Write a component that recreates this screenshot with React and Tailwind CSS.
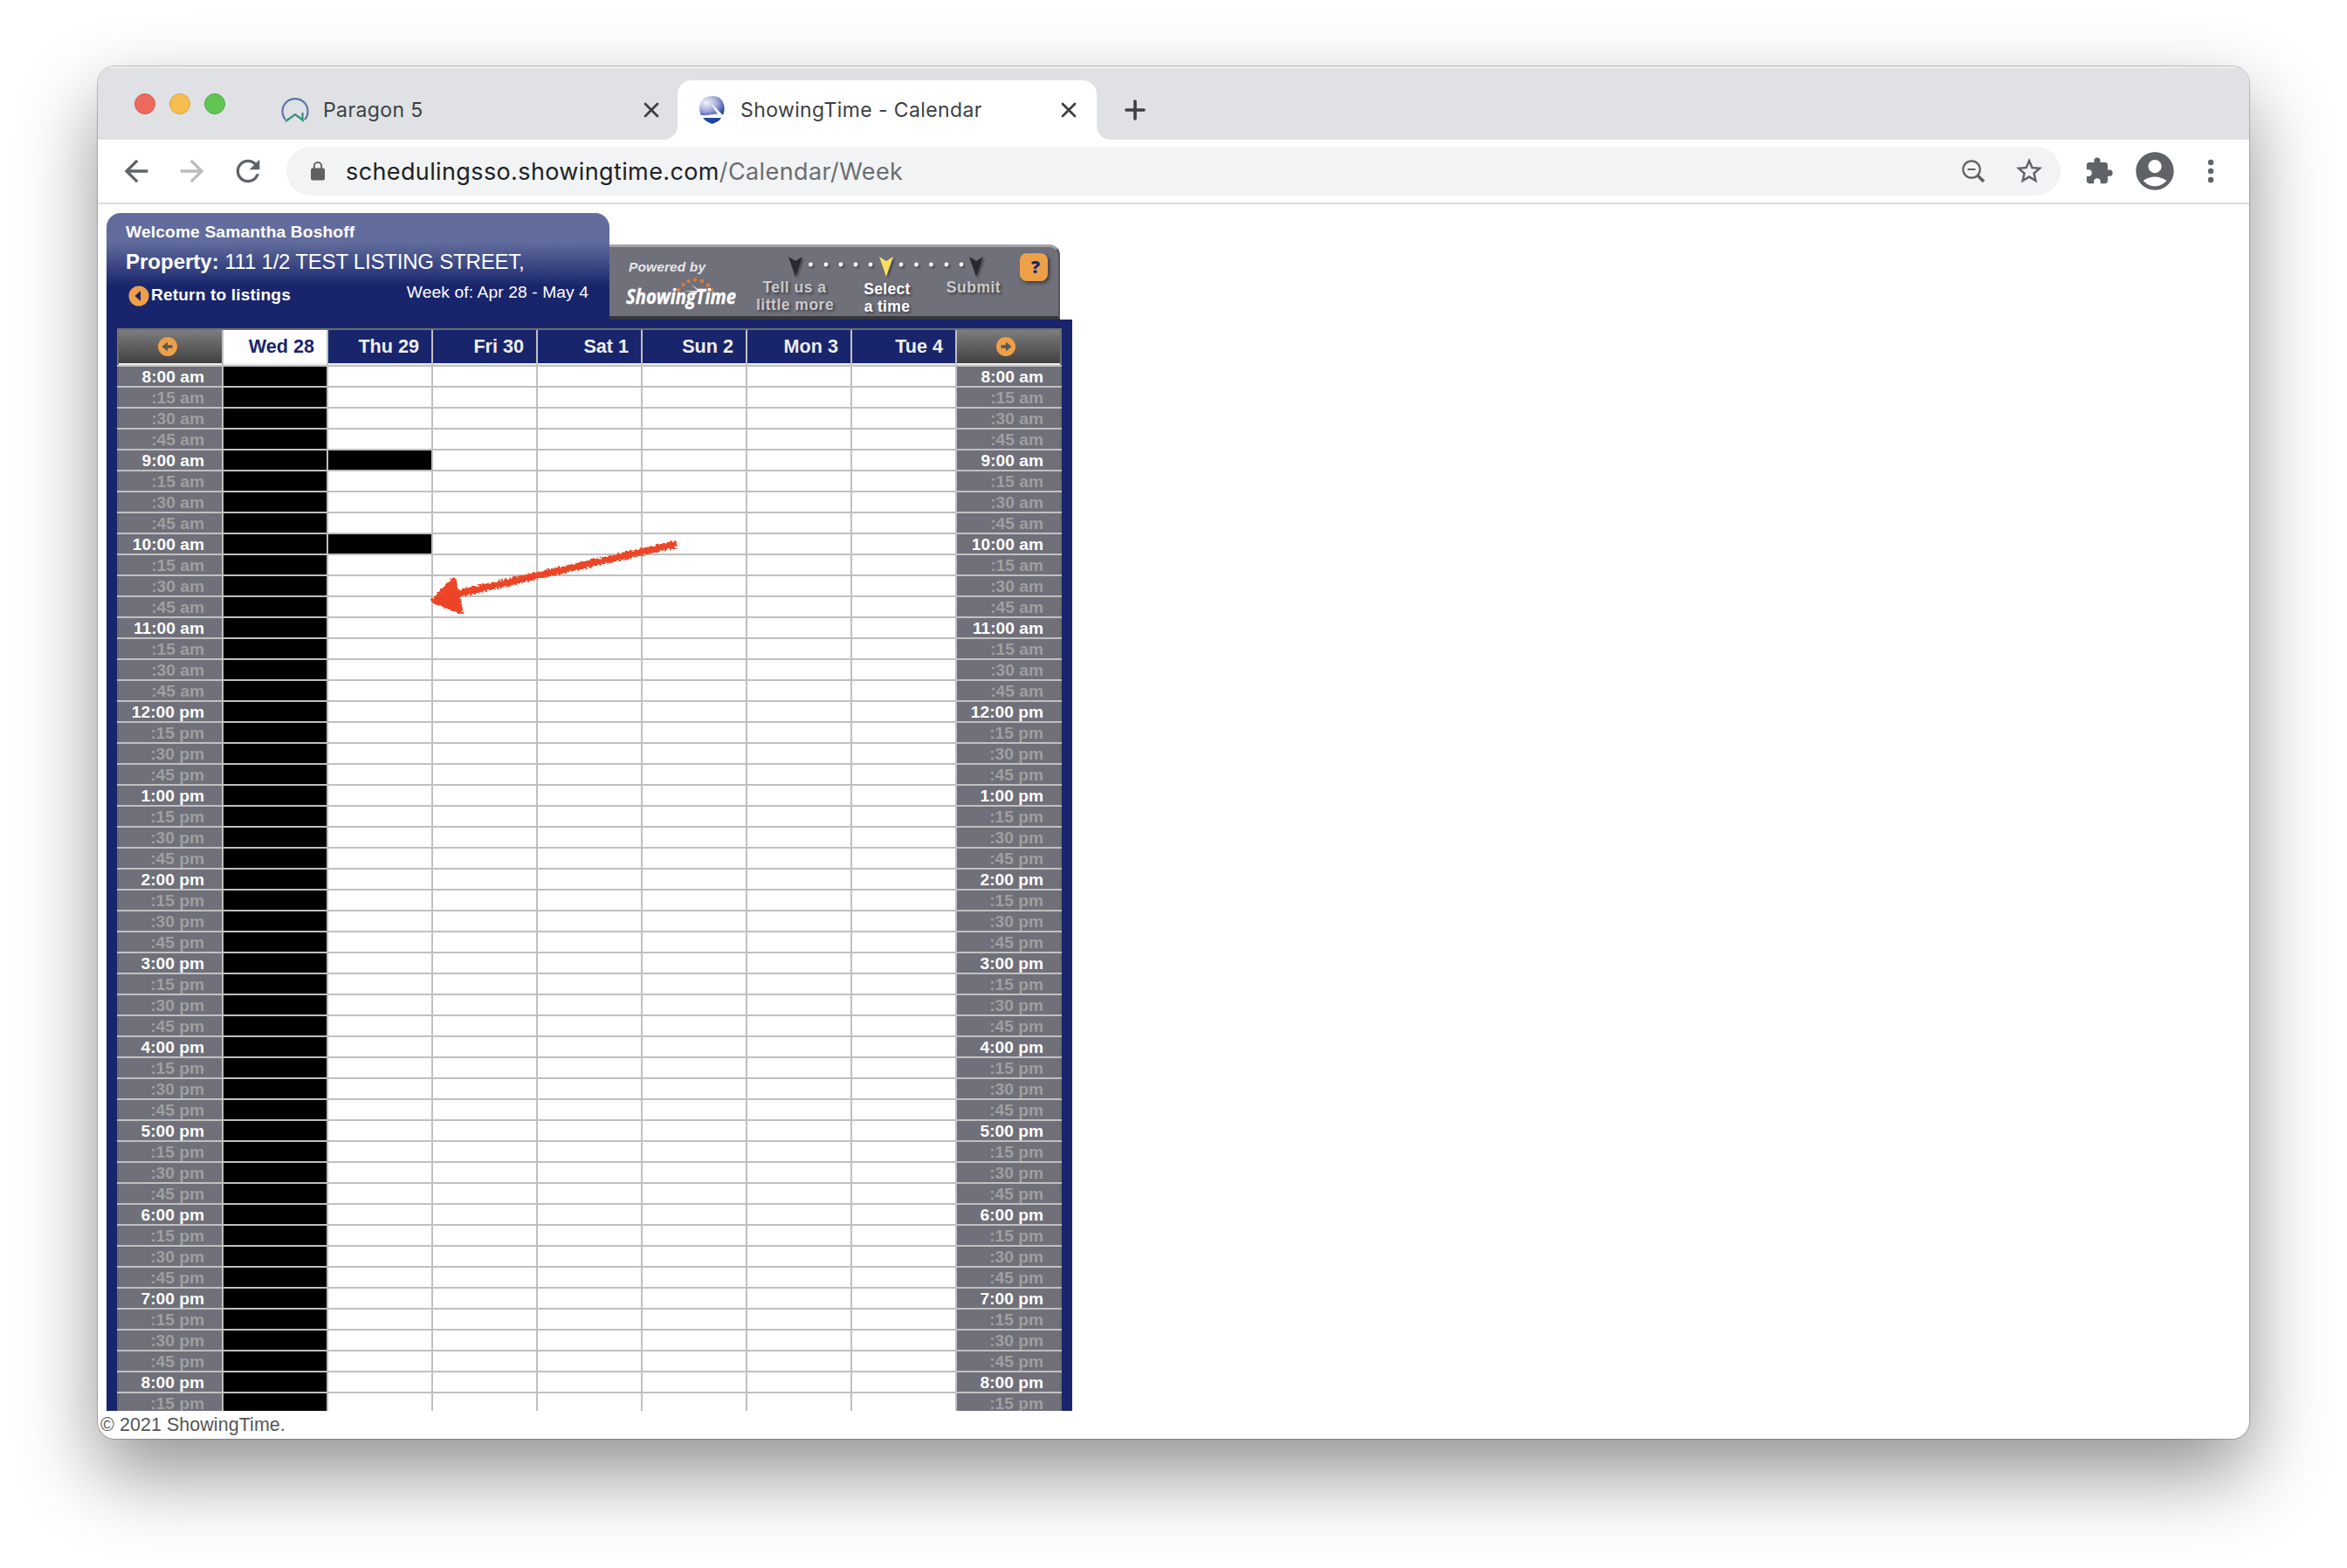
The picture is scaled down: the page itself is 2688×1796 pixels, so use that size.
import React from "react";
import clsx from "clsx";
import {
  MdArrowBack,
  MdArrowForward,
  MdStarOutline,
  MdExtension,
  MdRefresh,
  MdAccountCircle,
} from "react-icons/md";

const days = ["Wed 28", "Thu 29", "Fri 30", "Sat 1", "Sun 2", "Mon 3", "Tue 4"];

// Cells that can not be booked, keyed by day
const blocked = {
  "Thu 29": ["9:00 am", "10:00 am"],
};

const allSlots = [];
for (let h = 8; h <= 20; h++) {
  const suffix = h < 12 ? "am" : "pm";
  const hour = h > 12 ? h - 12 : h;
  ["00", "15", "30", "45"].forEach((m) => {
    allSlots.push({
      key: `${h}${m}`,
      full: m === "00",
      label: m === "00" ? `${hour}:00 ${suffix}` : `:${m} ${suffix}`,
    });
  });
}

// Last slot of the day is 8:15 pm
const slots = allSlots.slice(0, 50);

function CloseIcon() {
  return (
    <svg width="18" height="18" viewBox="0 0 18 18" stroke="#3c4043" strokeWidth="2.8" strokeLinecap="round">
      <path d="M2 2L16 16M16 2L2 16" />
    </svg>
  );
}

function LockIcon() {
  return (
    <svg width="16" height="22" viewBox="0 0 16 22">
      <rect x="0" y="7.500" width="16" height="14" rx="2" fill="#5f6061" />
      <path d="M3.800 8.500V5.200A4.200 4.200 0 0 1 12.200 5.200V8.500" fill="none" stroke="#5f6061" strokeWidth="1.900" />
    </svg>
  );
}

function ZoomOutIcon() {
  return (
    <svg width="27" height="27" viewBox="0 0 27 27" fill="none" stroke="#5f6061">
      <circle cx="11" cy="11" r="9.700" strokeWidth="2.200" />
      <path d="M6.500 11H15.500" strokeWidth="1.800" />
      <path d="M18 18L25 25" strokeWidth="3.600" />
    </svg>
  );
}

function ParagonIcon() {
  return (
    <svg width="32" height="32" viewBox="0 0 32 32" fill="none">
      <path d="M5 25A14.5 14.5 0 1 1 27 25" stroke="#5b78aa" strokeWidth="2.2" />
      <path d="M5 27L16 19L22 23.500L26 26.500M24.500 17V25" stroke="#35917f" strokeWidth="2.2" />
    </svg>
  );
}

function ShowingTimeIcon() {
  return (
    <svg width="32" height="34" viewBox="0 0 32 34">
      <defs>
        <radialGradient id="globe" cx="0.28" cy="0.34" r="0.8">
          <stop offset="0" stopColor="#f4f4fb" />
          <stop offset="0.55" stopColor="#a4abd7" />
          <stop offset="1" stopColor="#2a4aab" />
        </radialGradient>
      </defs>
      <path d="M3 23C0 17 0 9 6 4C12 0 22 0 26 5C31 11 30 18 28 23Z" fill="url(#globe)" />
      <path d="M14 9L30 25L23 24Z" fill="#fff" />
      <path d="M2 24L20 21.500L28 25.500H2Z" fill="#fff" />
      <path d="M5 26H26C24 30 20 31 15.500 33C12 31 8 30 5 26Z" fill="#1f43a3" />
    </svg>
  );
}

function TabStrip() {
  return (
    <div className="flex h-[84px] shrink-0 bg-[#dfe1e5] border-t-2 border-[#eceef0]">
      <div className="flex gap-4 pl-[42px] pt-[29px] w-[210px]">
        <span className="size-6 rounded-full bg-[#ed6a5e] border border-[#d35a50]" />
        <span className="size-6 rounded-full bg-[#f5bf4f] border border-[#d8a240]" />
        <span className="size-6 rounded-full bg-[#61c554] border border-[#52a843]" />
      </div>
      <div className="flex items-center w-[454px] pt-[16px] h-[82px] pb-[2px] pr-[21px]">
        <div className="mt-1"><ParagonIcon /></div>
        <span className="ml-[16px] flex-1 text-[23px] tracking-[0.4px] text-[#3c4043]">Paragon 5</span>
        <CloseIcon />
      </div>
      <div className="flex items-end pt-[14px]">
        <svg width="16" height="16" viewBox="0 0 16 16" className="-ml-4">
          <path d="M16 0V16H0A16 16 0 0 0 16 0Z" fill="#fff" />
        </svg>
        <div className="flex h-[68px] w-[480px] items-center rounded-t-[16px] bg-white pl-[24px] pr-[23px]">
          <ShowingTimeIcon />
          <span className="ml-[16px] flex-1 text-[23px] tracking-[0.4px] text-[#3c4043]">ShowingTime - Calendar</span>
          <CloseIcon />
        </div>
        <svg width="16" height="16" viewBox="0 0 16 16">
          <path d="M0 0V16H16A16 16 0 0 1 0 0Z" fill="#fff" />
        </svg>
      </div>
      <svg width="24" height="24" viewBox="0 0 24 24" className="ml-4 mt-[36px]" stroke="#3c4043" strokeWidth="3.6" strokeLinecap="round">
        <path d="M12 2V22M2 12H22" />
      </svg>
    </div>
  );
}

function Toolbar() {
  return (
    <div className="flex h-[74px] shrink-0 items-center border-b-2 border-[#dadce0] bg-white text-[#5f6368]">
      <MdArrowBack size={40} className="ml-[24px]" />
      <MdArrowForward size={40} className="ml-[24px] text-[#babcbe]" />
      <MdRefresh size={40} className="ml-[24px]" />
      <div className="ml-[24px] flex h-14 w-[2032px] items-center rounded-full bg-[#f1f3f4] pl-[28px] pr-[18px]">
        <LockIcon />
        <span className="ml-[24px] flex-1 pt-[2px] text-[27px] tracking-[0.38px] text-[#6b6d70]">
          <span className="text-[#202124]">schedulingsso.showingtime.com</span>/Calendar/Week
        </span>
        <ZoomOutIcon />
        <MdStarOutline size={36} className="ml-[32px]" />
      </div>
      <MdExtension size={34} className="ml-[27px]" />
      <MdAccountCircle size={52} className="ml-[21px]" />
      <svg width="8" height="28" viewBox="0 0 8 28" fill="#5f6368" className="ml-[34px]">
        <circle cx="4" cy="4" r="3.200" />
        <circle cx="4" cy="14" r="3.200" />
        <circle cx="4" cy="24" r="3.200" />
      </svg>
    </div>
  );
}

function OrangeArrow({ flip }) {
  return (
    <svg width="22" height="22" viewBox="0 0 22 22" className={clsx(flip && "-scale-x-100")}>
      <circle cx="11" cy="11" r="11" fill="#eea048" />
      <path d="M4.500 11L11 5.500V9.300H16.500V12.700H11V16.500Z" fill="#585858" />
    </svg>
  );
}

function Logo() {
  return (
    <svg width="132" height="72" viewBox="0 0 132 72" className="overflow-visible">
      <text x="3" y="17" textLength="88" fill="#e6e6e8" fontFamily="Liberation Sans, sans-serif" fontWeight="700" fontStyle="italic" fontSize="15.500">
        Powered by
      </text>
      <g fill="#d97c3c">
        <circle cx="60" cy="38" r="2.200" />
        <circle cx="65.500" cy="32" r="2.200" />
        <circle cx="71.500" cy="28" r="2.200" />
        <circle cx="79" cy="26.500" r="2.200" />
        <circle cx="87" cy="28" r="2.200" />
        <circle cx="94" cy="32.500" r="2.200" />
        <circle cx="98" cy="38" r="2.200" />
      </g>
      <path d="M74 31L82 39L66 39.500L82 41L83 38Z" fill="#eee" />
      <text x="0" y="54" textLength="126" lengthAdjust="spacingAndGlyphs" fill="#fff" stroke="#fff" strokeWidth="0.4" fontFamily="Open Sans, sans-serif" fontWeight="700" fontStyle="italic" fontSize="24">
        ShowingTime
      </text>
    </svg>
  );
}

function StepMarkers() {
  const dots = [35.5, 53, 70, 87, 104, 139, 156.5, 173.5, 191, 208];
  return (
    <svg width="240" height="24" viewBox="0 0 240 24" className="overflow-visible drop-shadow-[2px_2px_1px_rgba(0,0,0,0.35)]">
      {[
        [18, "#2a2a2e"],
        [122, "#f8e05e"],
        [225, "#2a2a2e"],
      ].map(([x, color]) => (
        <path key={x} d={`M${x - 8} 0L${x} 5L${x + 8} 0L${x} 23Z`} fill={color} />
      ))}
      {dots.map((x) => (
        <circle key={x} cx={x} cy="9" r="2.400" fill="#fff" />
      ))}
    </svg>
  );
}

function Banner() {
  return (
    <div className="flex h-[86px] w-[516px] rounded-tr-[12px] border-b-[4px] border-r-2 border-t-[3px] border-b-[#37373c] border-r-[#55555c] border-t-[#a3a4a8] bg-[#70707a] pl-[19px] pt-[11px]">
      <Logo />
      <div className="ml-[16px] w-[303px] shrink-0">
        <div className="pl-[28px] h-[24px]">
          <StepMarkers />
        </div>
        <div className="flex pl-px text-center text-[17.5px] font-bold leading-[20px] tracking-[0.5px] text-[#c8c8cb] [text-shadow:2px_2px_3px_rgba(0,0,0,0.45)]">
          <div className="w-[88px] whitespace-nowrap pt-[1px]">
            Tell us a<br />
            little more
          </div>
          <div className="ml-[30px] w-[64px] whitespace-nowrap pt-[3px] tracking-[0.3px] text-white">
            Select
            <br />a time
          </div>
          <div className="ml-[35px] w-[64px] pt-[1px]">Submit</div>
        </div>
      </div>
      <div className="-mt-[4px] flex size-8 shrink-0 items-center justify-center rounded-[8px] bg-[#eea048] pl-[4px] font-['Open_Sans',sans-serif] text-[20px] font-extrabold leading-none text-[#18256c] shadow-[2px_2px_4px_rgba(0,0,0,0.5)]">
        ?
      </div>
    </div>
  );
}

function ListingHeader() {
  return (
    <div className="h-[122px] w-[576px] rounded-t-[16px] bg-[linear-gradient(to_bottom,#636d9d_0px,#616b9c_34px,#18256c_84px)] pl-[22px] pr-[24px] pt-[11px] text-white">
      <div className="h-[30px] whitespace-nowrap text-[19.2px] font-bold leading-[22px] tracking-[0.15px]">Welcome Samantha Boshoff</div>
      <div className="h-[37px] whitespace-nowrap text-[24px] leading-[30px] tracking-[-0.2px]">
        <b className="tracking-normal">Property:</b> 111 1/2 TEST LISTING STREET,
      </div>
      <div className="flex items-start justify-between text-[19.2px] leading-[22px] tracking-[0.12px]">
        <div className="flex items-center pl-[3px] pt-[3px] font-bold">
          <svg width="24" height="24" viewBox="0 0 24 24" className="mr-[2px] mt-[2px]">
            <circle cx="12" cy="12" r="11.500" fill="#eea048" />
            <path d="M14 6V18L7.500 12Z" fill="#18256c" />
          </svg>
          Return to listings
        </div>
        <div className="pt-[2px]">Week of: Apr 28 - May 4</div>
      </div>
    </div>
  );
}

function NavCell({ flip }) {
  return (
    <div className="flex w-[118px] items-center justify-center border-b-2 border-[#eee] bg-[linear-gradient(#7d7d7d,#414141)] pr-[6px]">
      <OrangeArrow flip={flip} />
    </div>
  );
}

function TimeCell({ slot, last }) {
  return (
    <div
      className={clsx(
        "w-[120px] bg-[#70707a] text-right text-[19.2px] font-bold leading-[23px] border-[#69696b]",
        last ? "border-r-2 pr-[19px]" : "border-l-2 pr-[20px]",
        slot.full ? "text-white" : "text-[#9f9f9f]"
      )}
    >
      {slot.label}
    </div>
  );
}

function CalendarGrid() {
  return (
    <div className="w-[1082px] border-t-2 border-[#6f6f6f]">
      {/* Day names */}
      <div className="flex h-[42px] border-b-2 border-[#c0c0c0]">
        <div className="flex w-[122px] border-l-2 border-r-2 border-l-[#6f6f6f] border-r-[#c0c0c0]">
          <NavCell />
        </div>
        {days.map((day, i) => (
          <div key={day} className="w-[120px] border-r-2 border-[#c0c0c0]">
            <div
              className={clsx(
                "h-10 border-b-2 border-[#eee] pr-[14px] text-right text-[21.6px] font-bold leading-[37px]",
                i === 0 ? "bg-white text-[#18256c]" : "bg-[#18256c] text-[#eee]"
              )}
            >
              {day}
            </div>
          </div>
        ))}
        <div className="flex w-[120px] border-r-2 border-[#6f6f6f]">
          <NavCell flip />
        </div>
      </div>

      {/* Time slots */}
      {slots.map((slot) => (
        <div key={slot.key} className="flex h-6 border-b-2 border-[#c0c0c0]">
          <TimeCell slot={slot} />
          <div className="w-[2px] bg-[#c0c0c0]" />
          {days.map((day, i) => (
            <div
              key={day}
              className={clsx(
                "w-[120px] border-r-2 border-[#c0c0c0]",
                i === 0 || blocked[day]?.includes(slot.label) ? "bg-black" : "bg-white"
              )}
            />
          ))}
          <TimeCell slot={slot} last />
        </div>
      ))}
    </div>
  );
}

// Hand drawn pointer lying over the calendar
function CrayonArrow() {
  return (
    <svg width="300" height="60" viewBox="0 0 300 60" className="absolute left-[378px] top-[414px] overflow-visible">
      <filter id="crayon" x="-10%" y="-30%" width="120%" height="160%">
        <feTurbulence type="fractalNoise" baseFrequency="0.35" numOctaves="2" seed="4" />
        <feDisplacementMap in="SourceGraphic" scale="5" />
      </filter>
      <g filter="url(#crayon)" stroke="#ec4427" fill="#ec4427" strokeLinejoin="round" strokeLinecap="butt">
        <path d="M30 33L285 -25" strokeWidth="8" />
        <path d="M6 40L30 16L38 53Z" strokeWidth="5" />
      </g>
    </svg>
  );
}

export default function App() {
  return (
    <div className="h-[1796px] w-[2688px] overflow-hidden bg-white pl-[112px] pt-[76px]">
      <div className="flex h-[1572px] w-[2464px] flex-col overflow-hidden rounded-[20px] bg-white font-[Inter,sans-serif] shadow-[0_0_0_1px_rgba(0,0,0,0.22),0_40px_90px_rgba(0,0,0,0.43)]">
        <TabStrip />
        <Toolbar />
        <div className="relative flex-1 pt-[10px] font-['Liberation_Sans',Arial,sans-serif]">
          <div className="flex items-end pl-[10px]">
            <ListingHeader />
            <Banner />
          </div>
          <div className="ml-[10px] h-[1250px] w-[1106px] overflow-hidden bg-[#18256c] px-3 pt-[10px]">
            <CalendarGrid />
          </div>
          <div className="pl-[3px] pt-px text-[21.4px] leading-[31px] tracking-[0.1px] text-[#555]">© 2021 ShowingTime.</div>
          <CrayonArrow />
        </div>
      </div>
    </div>
  );
}
